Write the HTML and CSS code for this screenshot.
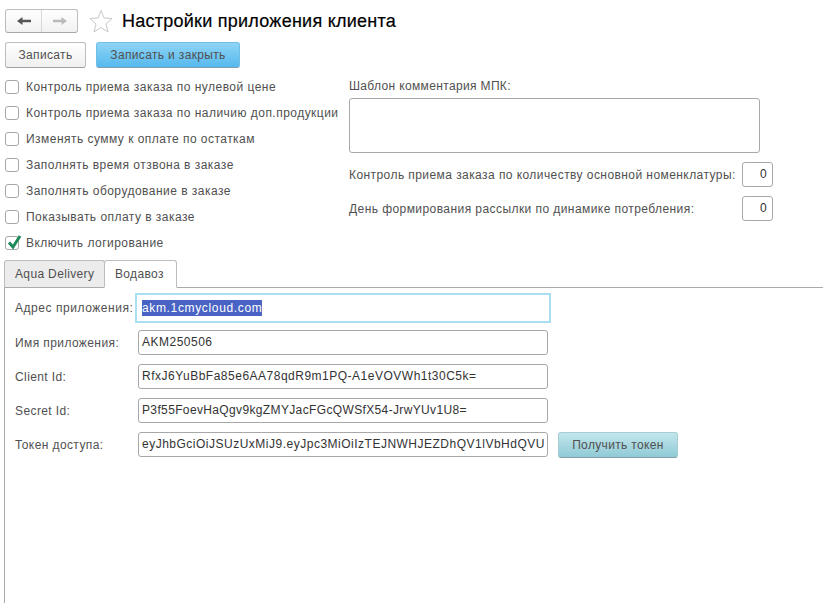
FILE: index.html
```html
<!DOCTYPE html>
<html lang="ru">
<head>
<meta charset="utf-8">
<title>Настройки приложения клиента</title>
<link rel="stylesheet" href="styles.css">
</head>
<body>
<header class="head">
  <div class="nav">
    <span class="nav-btn nav-back"><svg width="16" height="10" viewBox="0 0 16 10"><path d="M1 5 6.500 1V3.800H15V6.200H6.500V9Z" fill="#555"/></svg></span>
    <span class="nav-btn"><svg width="16" height="10" viewBox="0 0 16 10"><path d="M15 5 9.500 1V3.800H1V6.200H9.500V9Z" fill="#bbb"/></svg></span>
  </div>
  <svg class="star" width="24" height="24" viewBox="0 0 24 24"><path d="M12 1.500 15 9 23 9.500 17 15 19 23 12 18.500 5 23 7 15 1 9.500 9 9Z" fill="#fff" stroke="#c8c8c8"/></svg>
  <h1 class="title">Настройки приложения клиента</h1>
</header>
<div class="actions">
  <button class="btn btn-plain">Записать</button>
  <button class="btn btn-primary">Записать и закрыть</button>
</div>
<div class="top">
  <div class="checks">
    <label class="check"><span class="box"></span>Контроль приема заказа по нулевой цене</label>
    <label class="check"><span class="box"></span>Контроль приема заказа по наличию доп.продукции</label>
    <label class="check"><span class="box"></span>Изменять сумму к оплате по остаткам</label>
    <label class="check"><span class="box"></span>Заполнять время отзвона в заказе</label>
    <label class="check"><span class="box"></span>Заполнять оборудование в заказе</label>
    <label class="check"><span class="box"></span>Показывать оплату в заказе</label>
    <label class="check"><span class="box"><svg class="tick" width="16" height="16" viewBox="0 0 16 16"><path d="M3 8.500 7 13 14 2" fill="none" stroke="#1f8a5b" stroke-width="3"/></svg></span>Включить логирование</label>
  </div>
  <div class="side">
    <div class="side-label">Шаблон комментария МПК:</div>
    <div class="memo"></div>
    <div class="num-row"><span class="num-label">Контроль приема заказа по количеству основной номенклатуры:</span><span class="num">0</span></div>
    <div class="num-row"><span class="num-label">День формирования рассылки по динамике потребления:</span><span class="num">0</span></div>
  </div>
</div>
<div class="tabs">
  <span class="tab">Aqua Delivery</span>
  <span class="tab tab-active">Водавоз</span>
  <span class="tab-rest"></span>
</div>
<div class="panel">
  <div class="row row-focus"><span class="lbl">Адрес приложения:</span><span class="field field-focus"><span class="sel">akm.1cmycloud.com</span></span></div>
  <div class="row"><span class="lbl">Имя приложения:</span><span class="field">AKM250506</span></div>
  <div class="row"><span class="lbl">Client Id:</span><span class="field">RfxJ6YuBbFa85e6AA78qdR9m1PQ-A1eVOVWh1t30C5k=</span></div>
  <div class="row"><span class="lbl">Secret Id:</span><span class="field field-tight">P3f55FoevHaQgv9kgZMYJacFGcQWSfX54-JrwYUv1U8=</span></div>
  <div class="row"><span class="lbl">Токен доступа:</span><span class="field">eyJhbGciOiJSUzUxMiJ9.eyJpc3MiOiIzTEJNWHJEZDhQV1lVbHdQVU</span><button class="btn btn-token">Получить токен</button></div>
</div>
</body>
</html>
```

FILE: styles.css
```css
* { box-sizing: border-box; }
html, body { height: 100%; }
body {
  margin: 0;
  display: flex;
  flex-direction: column;
  overflow: hidden;
  background: #fff;
  color: #505050;
  font: 12px/14px "Liberation Sans", Arial, sans-serif;
  letter-spacing: 0.35px;
}
.head { display: flex; align-items: center; height: 24px; margin: 9px 0 0 5px; }
.nav {
  display: flex; width: 73px; height: 24px;
  border: 1px solid #bdbdbd; border-bottom-color: #a8a8a8; border-radius: 3px;
  background: linear-gradient(#fff, #f1f1f1);
}
.nav-btn { flex: 1; display: flex; align-items: center; justify-content: center; }
.nav-back { border-right: 1px solid #d8d8d8; }
.star { margin-left: 11px; }
.title { margin: 0 0 0 9px; font-size: 18px; font-weight: 400; letter-spacing: 0.25px; color: #000; line-height: 24px; -webkit-text-stroke: 0.2px #000; }
.btn {
  font: inherit; letter-spacing: inherit; color: #505050; padding: 0; height: 26px;
  border: 1px solid #bdbdbd; border-bottom-color: #a0a0a0; border-radius: 3px;
}
.actions { display: flex; gap: 10px; margin: 9px 0 0 5px; }
.btn-plain { width: 81px; background: linear-gradient(#fff, #f0f0f0); }
.btn-primary { width: 144px; background: linear-gradient(#8fd4f6, #55b9ee); border-color: #72bfe6 #72bfe6 #7f9fb2; }
.top { display: flex; margin-top: 6px; }
.checks { width: 349px; padding-left: 5px; letter-spacing: 0.47px; }
.check { display: flex; align-items: center; height: 26px; gap: 7px; white-space: nowrap; }
.box { position: relative; width: 14px; height: 14px; border: 1px solid #a8a8a8; border-radius: 3px; background: #fff; flex: none; }
.tick { position: absolute; left: 0; top: -3px; }
.side { width: 430px; }
.side-label { height: 24px; line-height: 24px; }
.memo { width: 411px; height: 55px; border: 1px solid #a8a8a8; border-radius: 3px; }
.num-row { display: flex; justify-content: space-between; align-items: center; width: 424px; height: 25px; margin-top: 9px; white-space: nowrap; }
.num-label { letter-spacing: 0.43px; }
.num { width: 31px; height: 25px; border: 1px solid #a8a8a8; border-radius: 3px; text-align: right; padding-right: 5px; line-height: 23px; color: #333; }
.tabs { display: flex; height: 28px; margin-top: 4px; padding-left: 4px; }
.tab {
  width: 101px; border: 1px solid #bdbdbd; border-radius: 3px 3px 0 0; background: #ececec;
  padding: 6px 0 0 10px; border-bottom-color: #aaa;
}
.tab-active { width: 73px; margin-left: -1px; background: #fff; border-bottom-color: #fff; }
.tab-rest { flex: 1; border-bottom: 1px solid #aaa; }
.panel { flex: 1; margin-left: 4px; border-left: 1px solid #aaa; padding: 5px 0 0 0; }
.row { display: flex; align-items: center; height: 25px; margin-top: 9px; padding-left: 10px; white-space: nowrap; letter-spacing: 0.4px; }
.row-focus { height: 30px; margin-top: 0; }
.row-focus + .row { margin-top: 7px; }
.lbl { width: 123px; flex: none; }
.row-focus .lbl { width: 120px; letter-spacing: 0.55px; }
.field {
  width: 410px; height: 25px; flex: none; overflow: hidden; border: 1px solid #a8a8a8; border-radius: 3px;
  padding: 0 0 0 3px; line-height: 23px; color: #333; letter-spacing: 0.5px;
}
.field-tight { letter-spacing: 0.36px; }
.field-focus { width: 416px; height: 30px; border: 2px solid #a9dff3; border-radius: 0; padding: 0 0 0 5px; line-height: 26px; letter-spacing: 0.65px; }
.sel { display: inline-block; line-height: 16px; background: #4863c4; color: #fff; }
.btn-token { width: 120px; margin-left: 10px; background: linear-gradient(#c3e6ec, #8fcad6); border-color: #a8cdd5 #a8cdd5 #88a0a8; letter-spacing: 0.35px; }
```
